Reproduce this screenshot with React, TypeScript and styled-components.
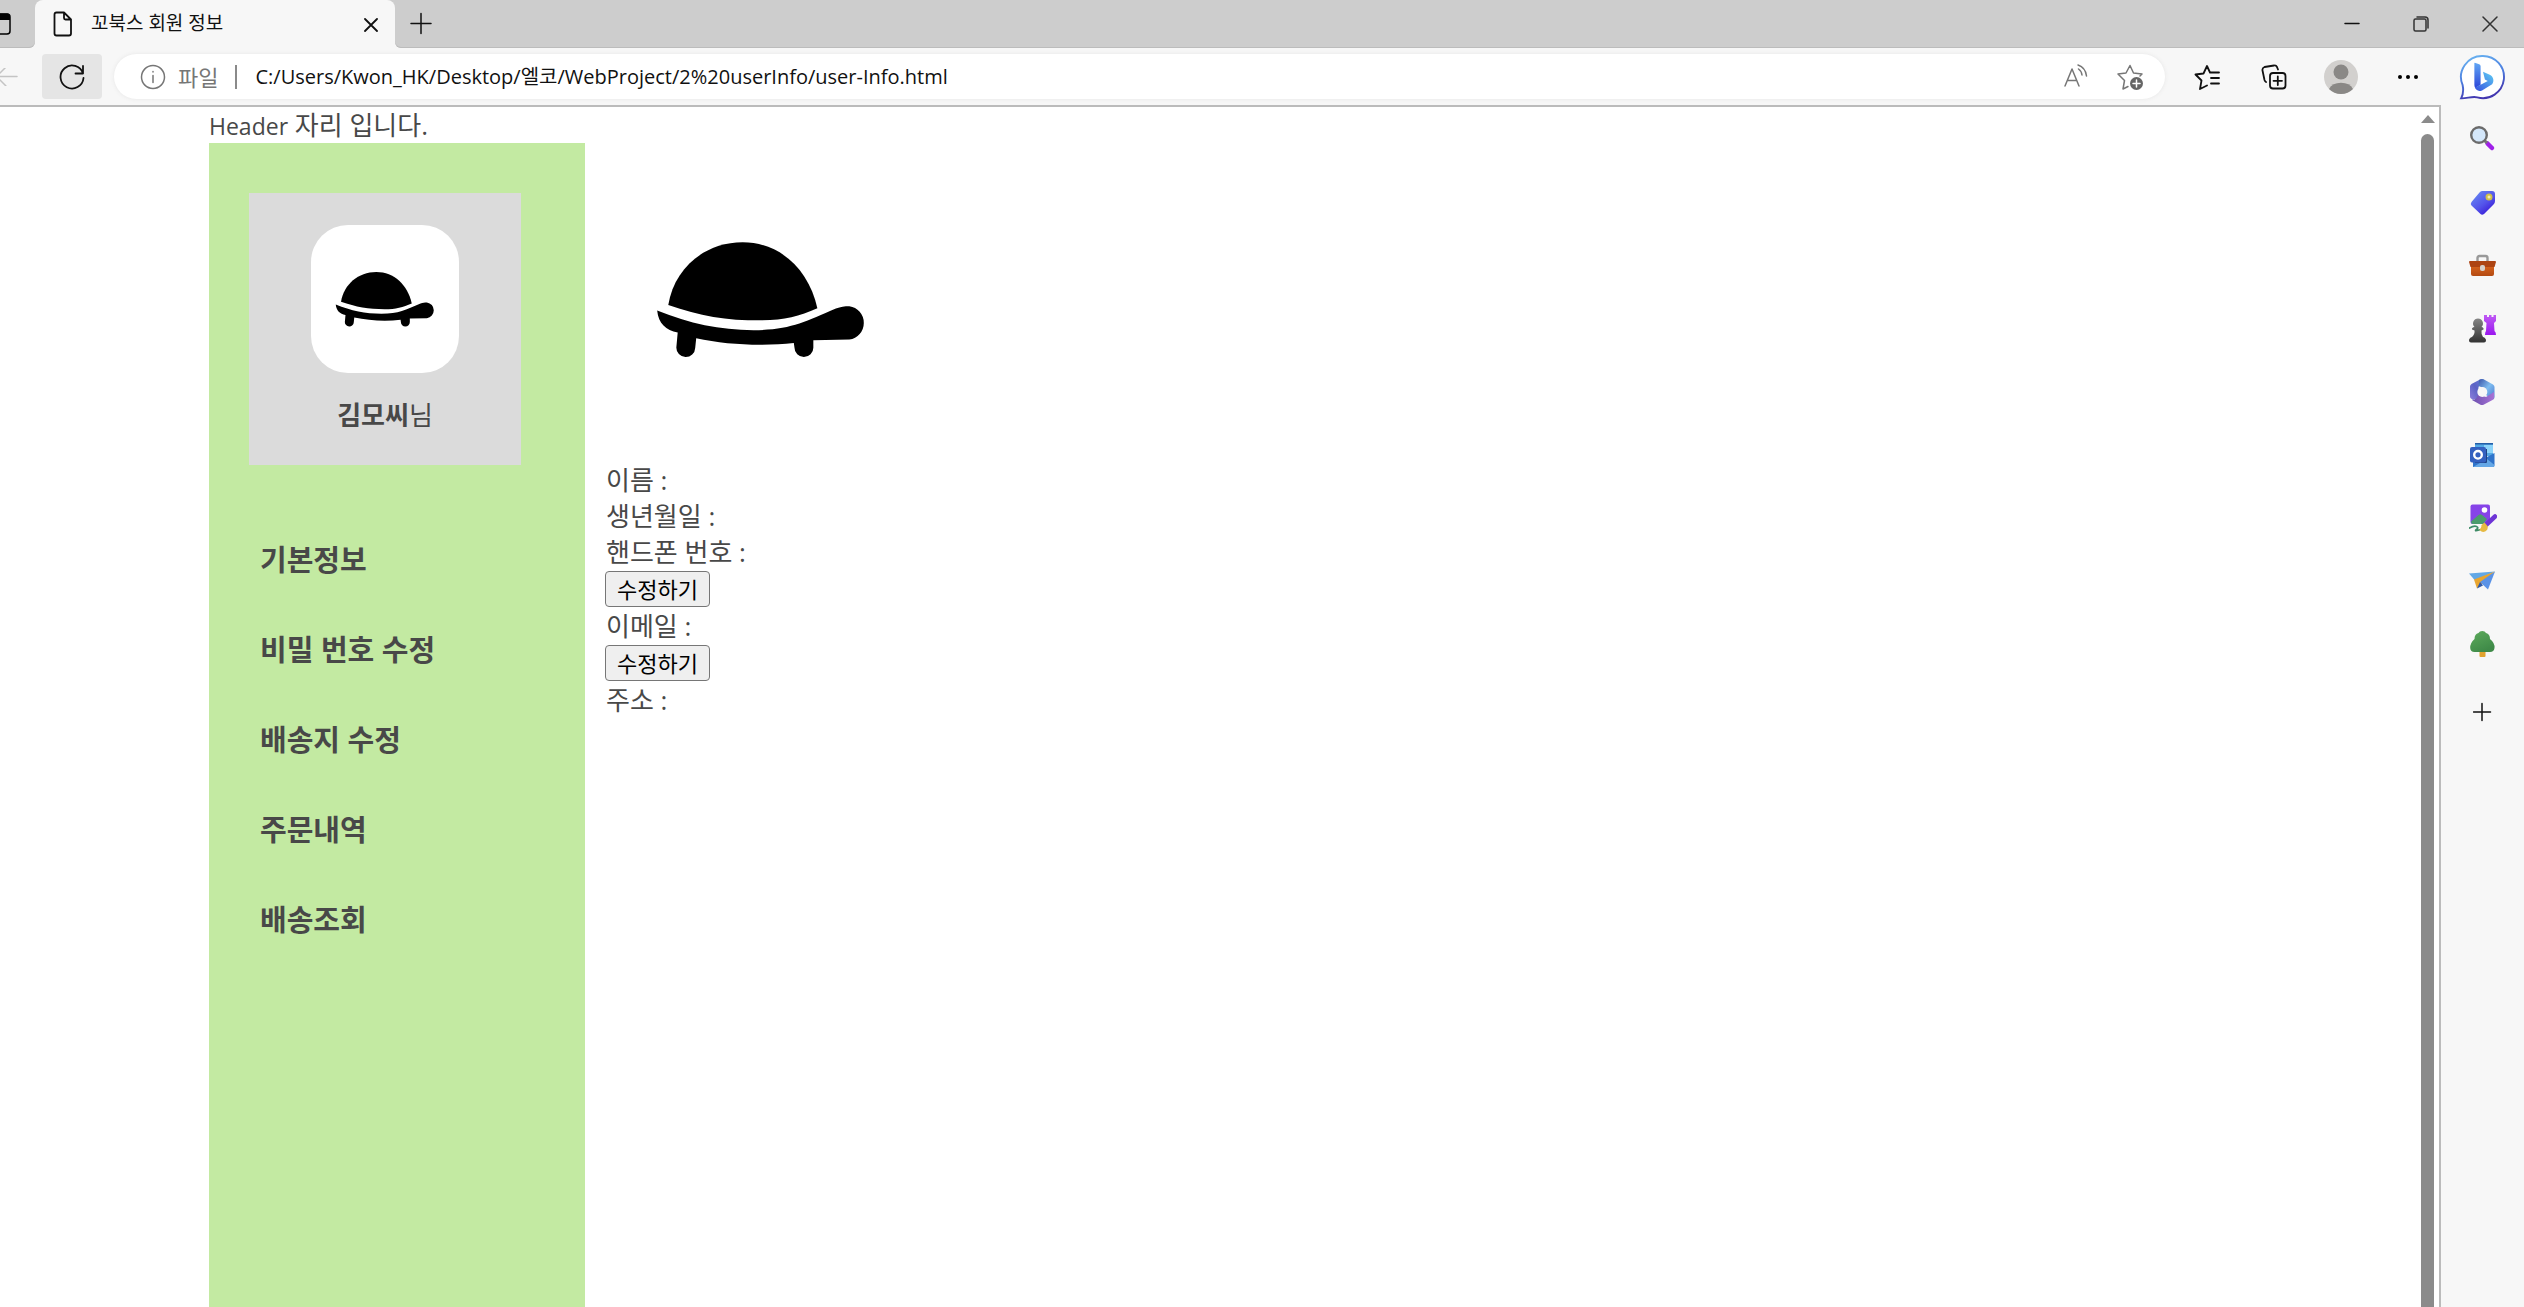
import React from "react";
import styled, { createGlobalStyle, css } from "styled-components";

const GlobalStyle = createGlobalStyle`
  *, *::before, *::after { box-sizing: border-box; }
  body {
    margin: 0;
    overflow: hidden;
    background: #fff;
    font-family: "Open Sans", "Noto Sans CJK KR", sans-serif;
  }
  svg { display: block; flex: none; }
  button { font: inherit; color: inherit; }
`;

const Browser = styled.div`
  display: flex;
  flex-direction: column;
  height: 100vh;
`;

const TitleBar = styled.header`
  display: flex;
  flex: none;
  height: 48px;
  background: #f7f7f7;
`;

const strip = css`
  display: flex;
  align-items: center;
  background: #cdcdcd;
  box-shadow: inset 0 -1px #bcbcbc;
`;

const StripStart = styled.div`
  ${strip}
  width: 35px;
  border-bottom-right-radius: 6px;
  overflow: hidden;
`;

const StripEnd = styled.div`
  ${strip}
  flex: 1;
  border-bottom-left-radius: 6px;
`;

const TabSlot = styled.div`
  width: 360px;
  background: #cdcdcd;
`;

const Tab = styled.div`
  display: flex;
  align-items: center;
  height: 48px;
  padding: 0 10px 0 18px;
  border-radius: 8px 8px 0 0;
  background: #f7f7f7;
  color: #111;
  font-size: 19px;
  line-height: 28px;
`;

const TabTitle = styled.span`
  flex: 1;
  margin-left: 18px;
  padding-bottom: 2px;
`;

const IconButton = styled.button<{ $width: number; $height?: number; $filled?: boolean }>`
  display: flex;
  align-items: center;
  justify-content: center;
  flex: none;
  width: ${(p) => p.$width}px;
  height: ${(p) => p.$height ?? 48}px;
  padding: 0;
  border: 0;
  border-radius: 4px;
  background: ${(p) => (p.$filled ? "#e5e5e5" : "transparent")};
`;

const WindowControls = styled.div`
  display: flex;
  margin-left: auto;
`;

const Body = styled.div`
  display: flex;
  flex: 1;
  min-height: 0;
`;

const Main = styled.div`
  display: flex;
  flex: 1;
  flex-direction: column;
  min-width: 0;
`;

const Toolbar = styled.div`
  display: flex;
  align-items: center;
  flex: none;
  height: 57px;
  background: #f7f7f7;
`;

const BackSlot = styled.div`
  display: flex;
  width: 42px;
  overflow: hidden;
`;

const AddressBar = styled.form`
  display: flex;
  align-items: center;
  flex: 1;
  height: 45px;
  margin: 0 8px 0 12px;
  padding: 0 8px 0 26px;
  border-radius: 23px;
  background: #fff;
  box-shadow: 0 0 4px #e6e6e6;
`;

const Scheme = styled.label`
  margin-left: 12px;
  padding-right: 17px;
  border-right: 2px solid #8a8a8a;
  color: #767676;
  font-size: 22px;
  line-height: 24px;
`;

const AddressInput = styled.input`
  flex: 1;
  min-width: 0;
  margin-left: 18px;
  padding: 0;
  border: 0;
  outline: 0;
  background: transparent;
  color: #111;
  font-family: inherit;
  font-size: 20px;
  line-height: 28px;
`;

const Viewport = styled.div`
  display: flex;
  flex: 1;
  min-height: 0;
  border-top: 2px solid #bbb;
  border-right: 2px solid #bbb;
  background: #fff;
`;

const Page = styled.div`
  display: flex;
  flex: 1;
  flex-direction: column;
  padding-left: 209px;
  color: #484848;
  font-size: 26px;
  line-height: 36px;
`;

const PageHeader = styled.header`
  height: 36px;
`;

const Latin = styled.span`
  font-size: 23px;
`;

const Columns = styled.div`
  display: flex;
  flex: 1;
`;

const Aside = styled.aside`
  width: 376px;
  padding: 50px 40px;
  background: #c3eaa2;
`;

const Profile = styled.section`
  display: flex;
  flex-direction: column;
  align-items: center;
  width: 272px;
  height: 272px;
  padding-top: 32px;
  background: #dbdbdb;
`;

const Portrait = styled.div`
  margin-bottom: 24px;
  border-radius: 37px;
  background: #fff;
`;

const UserName = styled.p`
  margin: 0;
`;

const Menu = styled.nav`
  display: flex;
  flex-direction: column;
  margin-top: 50px;
  padding-left: 11px;
`;

const MenuLink = styled.a`
  color: #484848;
  font-size: 29px;
  font-weight: 700;
  line-height: 90px;
  text-decoration: none;
`;

const Details = styled.main`
  flex: 1;
  padding-left: 20px;
`;

const Picture = styled.div`
  margin-bottom: 7px;
`;

const Field = styled.p`
  margin: 0;
  padding-left: 1px;
`;

const EditButton = styled.button`
  display: block;
  height: 36px;
  margin: 1px 0;
  padding: 0 11px;
  border: 1px solid #767676;
  border-radius: 4px;
  background: #efefef;
  color: #000;
  font-size: 22px;
  line-height: 32px;
`;

const ScrollTrack = styled.div`
  display: flex;
  flex-direction: column;
  align-items: center;
  width: 23px;
  padding-top: 8px;
`;

const ScrollThumb = styled.div`
  flex: 1;
  width: 13px;
  margin-top: 11px;
  border-radius: 7px 7px 0 0;
  background: #8b8b8b;
`;

const SideBar = styled.nav`
  display: flex;
  flex-direction: column;
  width: 83px;
  background: #f7f7f7;
`;

type LineIconProps = { size: number; color?: string; weight?: number; children: React.ReactNode };

const LineIcon = ({ size, color = "#111", weight = 1.5, children }: LineIconProps) => (
  <svg
    width={size}
    height={size}
    viewBox={`0 0 ${size} ${size}`}
    fill="none"
    stroke={color}
    strokeWidth={weight}
    strokeLinecap="round"
    strokeLinejoin="round"
    aria-hidden="true"
  >
    {children}
  </svg>
);

const Turtle = ({ size }: { size: number }) => (
  <svg width={size} height={size} viewBox="49 -172 927 927" role="img" aria-label="turtle">
    <path d="M237 309C255 200 345 123 458 123C570 123 655 205 680 319C625 343 580 355 510 355C410 355 330 342 237 309Z" />
    <path d="M204 326C300 365 390 384 490 384C600 384 640 360 735 320C750 314 760 313 775 313A50 50 0 0 1 775 412L668 414V436A28 28 0 0 1 612 436L610 422C520 432 410 428 320 408L317 437A28 28 0 0 1 261 435L265 391C230 385 208 365 204 326Z" />
  </svg>
);

const BingIcon = () => (
  <svg width="48" height="48" viewBox="0 0 50 50" aria-hidden="true">
    <defs>
      <linearGradient id="bingRing" x1="0" y1="0" x2="0.3" y2="1">
        <stop offset="0" stopColor="#6cb8f2" />
        <stop offset="0.55" stopColor="#4c7fe0" />
        <stop offset="1" stopColor="#4338b0" />
      </linearGradient>
      <linearGradient id="bingStem" x1="0" y1="0" x2="0" y2="1">
        <stop offset="0" stopColor="#62a8f5" />
        <stop offset="1" stopColor="#2b45d8" />
      </linearGradient>
      <linearGradient id="bingBowl" x1="1" y1="0" x2="0.2" y2="1">
        <stop offset="0" stopColor="#5fd0f5" />
        <stop offset="1" stopColor="#3a5be0" />
      </linearGradient>
    </defs>
    <path
      d="M24.500 2A22 22 0 1 1 19 45.200C14 43.700 8 46.500 2.200 46.200C4.500 42 4.700 37 3.800 32.500A22 22 0 0 1 24.500 2Z"
      fill="#fff"
      stroke="url(#bingRing)"
      strokeWidth="2"
    />
    <path d="M16.500 9L21 10.800Q22.500 11.500 22.500 13V32L17 35.500Q16 34 16 32V9.500Z" fill="url(#bingStem)" />
    <path d="M25 18.500L32 21.500C36 23.500 37 28 34.500 31.500L24 38C20 39.500 17.500 37.500 16.500 35L22.500 32L30 28L27 26.500Z" fill="url(#bingBowl)" />
  </svg>
);

const SearchIcon = () => (
  <svg width="28" height="28" viewBox="0 0 28 28" aria-hidden="true">
    <path d="M18.500 17.500L23 22" stroke="#a020e8" strokeWidth="4.500" strokeLinecap="round" />
    <path d="M15 14L18 17" stroke="#777" strokeWidth="3" />
    <circle cx="10" cy="9" r="7.800" fill="#d4e7fa" stroke="#6b6b6b" strokeWidth="2.400" />
  </svg>
);

const TagIcon = () => (
  <svg width="28" height="28" viewBox="0 0 28 28" aria-hidden="true">
    <defs>
      <linearGradient id="tagFill" x1="0" y1="0" x2="0.8" y2="1">
        <stop offset="0" stopColor="#6a92f4" />
        <stop offset="0.6" stopColor="#5352ea" />
        <stop offset="1" stopColor="#3412d4" />
      </linearGradient>
    </defs>
    <path d="M13 2H23Q26 2 26 5V12Q26 14 24.500 15.500L15 25Q13 26.500 11.500 25L2.500 16.500Q1 15 2.500 13L10.500 3.500Q11.500 2 13 2Z" fill="url(#tagFill)" />
    <circle cx="20" cy="8" r="2.500" fill="#f3ecb0" stroke="#cfc04a" strokeWidth="2" />
  </svg>
);

const ToolsIcon = () => (
  <svg width="28" height="28" viewBox="0 0 28 28" aria-hidden="true">
    <defs>
      <linearGradient id="caseFill" x1="0" y1="0" x2="0" y2="1">
        <stop offset="0" stopColor="#d9661f" />
        <stop offset="1" stopColor="#b34a12" />
      </linearGradient>
    </defs>
    <path d="M8.500 9V6Q8.500 4 10.500 4H16.500Q18.500 4 18.500 6V9" fill="none" stroke="#999" strokeWidth="2.400" />
    <path d="M2 13H25V22Q25 24 23 24H4Q2 24 2 22Z" fill="url(#caseFill)" />
    <path d="M0 10Q0 9 1 9H26Q27 9 27 10L25.500 15H1.500Z" fill="#ad4413" />
    <rect x="11" y="13" width="5" height="6" rx="2" fill="#d6d0cb" />
  </svg>
);

const GamesIcon = () => (
  <svg width="28" height="28" viewBox="0 0 28 28" aria-hidden="true">
    <defs>
      <linearGradient id="rookFill" x1="0" y1="0" x2="0" y2="1">
        <stop offset="0" stopColor="#c05af4" />
        <stop offset="1" stopColor="#9a17ef" />
      </linearGradient>
      <linearGradient id="pawnFill" x1="0" y1="0" x2="0" y2="1">
        <stop offset="0" stopColor="#858585" />
        <stop offset="1" stopColor="#333" />
      </linearGradient>
    </defs>
    <path d="M15 0H18V2H20V0H22.500V2H24.500V0H27V6L25 8L25.500 16Q27 17 27 20H16Q16 17 17 16L17.500 8L15 6Z" fill="url(#rookFill)" />
    <path d="M9 3.500A5 5 0 0 1 12.500 12Q15 12.500 14.500 14.500L12.500 15.500Q12 19 14 22Q17 23 17 25.500Q17 27.500 15 27.500H2Q0 27.500 0 25.500Q0 23 3 22Q6 19 5.500 15.500L3 14.500Q2.500 12.500 5.500 12A5 5 0 0 1 9 3.500Z" fill="url(#pawnFill)" />
  </svg>
);

const OfficeIcon = () => (
  <svg width="28" height="28" viewBox="0 0 28 28" aria-hidden="true">
    <defs>
      <linearGradient id="officeLeft" x1="1" y1="0" x2="0" y2="1">
        <stop offset="0" stopColor="#6a7fdc" />
        <stop offset="0.5" stopColor="#5b62c4" />
        <stop offset="1" stopColor="#8d7fdc" />
      </linearGradient>
      <linearGradient id="officeRight" x1="0" y1="0" x2="1" y2="1">
        <stop offset="0" stopColor="#3b55a8" />
        <stop offset="0.5" stopColor="#7fbdf0" />
        <stop offset="1" stopColor="#4773cf" />
      </linearGradient>
      <linearGradient id="officeBase" x1="0" y1="0" x2="1" y2="0">
        <stop offset="0" stopColor="#6b4fae" />
        <stop offset="1" stopColor="#a873d6" />
      </linearGradient>
    </defs>
    <path d="M11 1.500Q13 0.500 15 1.500L9.500 9V20L4 22L2 20.500Q1 20 1 18.500V8.500Q1 7 2.500 6Z" fill="url(#officeLeft)" />
    <path d="M10 2Q13 0.500 15 1.500L24 6.500Q25.500 7.500 25.500 9V19Q25.500 20.500 24 21.500L17 17V11L9.500 8Z" fill="url(#officeRight)" />
    <path d="M9 16L17 19L25 14V19.500Q25 21 23.500 22L15 26.500Q13 27.500 11 26.500L3 22Q8 22 9 16Z" fill="url(#officeBase)" />
    <circle cx="13.300" cy="14" r="5" fill="#f7f7f7" />
  </svg>
);

const OutlookIcon = () => (
  <svg width="28" height="28" viewBox="0 0 28 28" aria-hidden="true">
    <path d="M6 2H24V15H6Z" fill="#54a9e6" />
    <path d="M15 4H24V12H15Z" fill="#8cd3fa" />
    <path d="M6 2H24V3.500H6Z" fill="#245fa8" />
    <path d="M4 16H18L25.500 12V24Q25.500 26 24 26H4Z" fill="#2f73ca" />
    <path d="M4 26L18 18L25.500 24Q25.500 26 24 26Z" fill="#64a7e6" />
    <path d="M17 8H18V21Q18 22 17 22H6V20H17Z" fill="#1f4383" />
    <rect x="1" y="6" width="16" height="15.500" rx="2" fill="#3461c0" />
    <circle cx="9" cy="13.800" r="3.800" fill="none" stroke="#fff" strokeWidth="2.400" />
  </svg>
);

const ImageIcon = () => (
  <svg width="28" height="28" viewBox="0 0 28 28" aria-hidden="true">
    <rect x="1.500" y="0.500" width="19.500" height="19.500" rx="2" fill="#8643e8" />
    <path d="M2 17.500L9.500 11Q11 9.500 13 11L18 15L14 20H4Q2 20 2 17.500Z" fill="#4b9b6d" />
    <circle cx="15.500" cy="6" r="2.800" fill="#fff" />
    <path d="M26 12.500L17.500 20.500" stroke="#6e35d6" strokeWidth="4.500" strokeLinecap="round" />
    <path d="M18.500 22A4.500 4.500 0 0 1 11 26.500Q9.500 26.500 10 25.500Q12.500 24.500 12.500 21L15.500 18.500Z" fill="#e6ba43" />
    <path d="M0.500 24Q5 21.500 7.500 22.500T7.500 25.500T10 26" fill="none" stroke="#3e8b67" strokeWidth="1.800" strokeLinecap="round" />
  </svg>
);

const SendIcon = () => (
  <svg width="28" height="28" viewBox="0 0 28 28" aria-hidden="true">
    <path d="M0 6.500L26 4.500L6 13.500Z" fill="#62a8e6" />
    <path d="M5 12.500L26 4.500L8 21.500Z" fill="#e9a52e" />
    <path d="M11 15L26 4.500L19 22.500Z" fill="#5a92e6" />
    <path d="M8 21.500L11 15L14 18.500Z" fill="#315aa8" />
  </svg>
);

const TreeIcon = () => (
  <svg width="28" height="28" viewBox="0 0 28 28" aria-hidden="true">
    <defs>
      <linearGradient id="treeFill" x1="0" y1="0" x2="0.5" y2="1">
        <stop offset="0" stopColor="#5dab5c" />
        <stop offset="1" stopColor="#3f8a48" />
      </linearGradient>
    </defs>
    <rect x="10.500" y="19" width="6" height="8" rx="1" fill="#e2a32f" />
    <path d="M9.500 3Q10.500 1 13.300 1Q16 1 17 3Q21 4 21 9Q26 13 25.500 18Q25 22 21 22H5.500Q1.500 22 1.200 18Q1 13 5.500 9Q5.500 4 9.500 3Z" fill="url(#treeFill)" />
  </svg>
);

const sideApps = [
  { name: "Search", Icon: SearchIcon },
  { name: "Shopping", Icon: TagIcon },
  { name: "Tools", Icon: ToolsIcon },
  { name: "Games", Icon: GamesIcon },
  { name: "Microsoft 365", Icon: OfficeIcon },
  { name: "Outlook", Icon: OutlookIcon },
  { name: "Image Creator", Icon: ImageIcon },
  { name: "Drop", Icon: SendIcon },
  { name: "Tree", Icon: TreeIcon },
];

const menuItems = ["기본정보", "비밀 번호 수정", "배송지 수정", "주문내역", "배송조회"];

export default function App() {
  return (
    <Browser>
      <GlobalStyle />
      <TitleBar>
        <StripStart>
          <svg width="12" height="24" viewBox="0 0 12 24" aria-hidden="true">
            <rect x="-12" y="2" width="22" height="20" rx="3" fill="none" stroke="#000" strokeWidth="1.500" />
            <path d="M0 1.500H8Q10 2 10 4V8H0Z" />
          </svg>
        </StripStart>
        <TabSlot>
          <Tab>
            <svg width="20" height="26" viewBox="0 0 20 26" fill="none" stroke="#111" strokeWidth="1.800" strokeLinejoin="round" aria-hidden="true">
              <path d="M3.500 1.500H11L18 8.500V22.500Q18 24.500 16 24.500H3.500Q1.500 24.500 1.500 22.500V3.500Q1.500 1.500 3.500 1.500ZM11 1.500V7Q11 8.500 12.500 8.500H18" />
            </svg>
            <TabTitle>꼬북스 회원 정보</TabTitle>
            <IconButton $width={28} aria-label="Close tab">
              <LineIcon size={16} weight={1.8}>
                <path d="M2 3L14 15M14 3L2 15" />
              </LineIcon>
            </IconButton>
          </Tab>
        </TabSlot>
        <StripEnd>
          <IconButton $width={52} aria-label="New tab">
            <LineIcon size={24}>
              <path d="M12 1.500V21.500M2 11.500H22" />
            </LineIcon>
          </IconButton>
          <WindowControls>
            <IconButton $width={69} aria-label="Minimize">
              <LineIcon size={16}>
                <path d="M1 7.500H15" />
              </LineIcon>
            </IconButton>
            <IconButton $width={69} aria-label="Restore">
              <LineIcon size={16} color="#333">
                <rect x="1" y="3" width="12" height="12" rx="1.500" />
                <path d="M4 1H12Q15 1 15 4V12" />
              </LineIcon>
            </IconButton>
            <IconButton $width={69} aria-label="Close">
              <LineIcon size={16} color="#333">
                <path d="M1 1L15 15M15 1L1 15" />
              </LineIcon>
            </IconButton>
          </WindowControls>
        </StripEnd>
      </TitleBar>

      <Body>
        <Main>
          <Toolbar>
            <BackSlot>
              <IconButton $width={18} $height={45} aria-label="Back">
                <LineIcon size={18} color="#c4c4c4">
                  <path d="M-3 8.500H17M6 -1L-3.500 8.500L6 18" />
                </LineIcon>
              </IconButton>
            </BackSlot>
            <IconButton $width={60} $height={45} $filled aria-label="Refresh">
              <LineIcon size={26} weight={1.8}>
                <path d="M24 9.500A11.500 11.500 0 1 0 24.500 14M24 2V9.500H16.500" />
              </LineIcon>
            </IconButton>
            <AddressBar onSubmit={(e) => e.preventDefault()}>
              <LineIcon size={26} color="#767676">
                <circle cx="13" cy="13" r="11.500" />
                <path d="M13 11.500V18.500M13 7.500V8" />
              </LineIcon>
              <Scheme htmlFor="address">파일</Scheme>
              <AddressInput
                id="address"
                type="text"
                spellCheck={false}
                defaultValue="C:/Users/Kwon_HK/Desktop/엘코/WebProject/2%20userInfo/user-Info.html"
              />
              <IconButton type="button" $width={54} $height={45} aria-label="Read aloud">
                <LineIcon size={26} color="#767676">
                  <path d="M2 22L9 5L16 22M4.500 16.500H13.500M15.500 5Q18.500 7 19 11M15 1Q22.500 3.500 23.500 12" />
                </LineIcon>
              </IconButton>
              <IconButton type="button" $width={54} $height={45} aria-label="Add to favorites">
                <LineIcon size={26} color="#767676">
                  <path d="M11 22.500L6 25L7.500 16.500L1 10L9 9L13 1.500L16.500 9L25 10L23 12" />
                  <circle cx="19.500" cy="19.500" r="6.500" fill="#666" stroke="none" />
                  <path d="M19.500 16V23M16 19.500H23" stroke="#fff" />
                </LineIcon>
              </IconButton>
            </AddressBar>
            <IconButton $width={67} $height={45} aria-label="Favorites">
              <LineIcon size={26} weight={1.8}>
                <path d="M13 21.500L6 25L7.500 16.500L1.500 10.500L9.500 9.500L13 2L16 8.500H25M17 14H25M17 19.500H25" />
              </LineIcon>
            </IconButton>
            <IconButton $width={67} $height={45} aria-label="Collections">
              <LineIcon size={26} weight={1.8}>
                <rect x="9" y="9" width="15.500" height="15.500" rx="3" />
                <path d="M16.800 12.500V21M12.500 16.800H21M5 18Q4 17.500 3.500 16L1.500 6.500Q1 4 3.500 3L13 1.500Q15 1 16 3L17 5.500" />
              </LineIcon>
            </IconButton>
            <IconButton $width={67} $height={45} aria-label="Profile">
              <svg width="34" height="34" viewBox="0 0 34 34" aria-hidden="true">
                <circle cx="17" cy="17" r="17" fill="#d2d0ce" />
                <circle cx="17" cy="12" r="7.500" fill="#8a8886" />
                <path d="M5 29A13 10 0 0 1 29 29A17 17 0 0 1 5 29Z" fill="#8a8886" />
              </svg>
            </IconButton>
            <IconButton $width={67} $height={45} aria-label="Settings and more">
              <svg width="20" height="4" viewBox="0 0 20 4" aria-hidden="true">
                <circle cx="2" cy="2" r="2" />
                <circle cx="10" cy="2" r="2" />
                <circle cx="18" cy="2" r="2" />
              </svg>
            </IconButton>
          </Toolbar>

          <Viewport>
            <Page>
              <PageHeader>
                <Latin>Header</Latin> 자리 입니다.
              </PageHeader>
              <Columns>
                <Aside>
                  <Profile>
                    <Portrait>
                      <Turtle size={148} />
                    </Portrait>
                    <UserName>
                      <b>김모씨</b>님
                    </UserName>
                  </Profile>
                  <Menu>
                    {menuItems.map((item) => (
                      <MenuLink key={item} href="#">
                        {item}
                      </MenuLink>
                    ))}
                  </Menu>
                </Aside>
                <Details>
                  <Picture>
                    <Turtle size={312} />
                  </Picture>
                  <Field>이름 :</Field>
                  <Field>생년월일 :</Field>
                  <Field>핸드폰 번호 :</Field>
                  <EditButton>수정하기</EditButton>
                  <Field>이메일 :</Field>
                  <EditButton>수정하기</EditButton>
                  <Field>주소 :</Field>
                </Details>
              </Columns>
            </Page>
            <ScrollTrack>
              <svg width="14" height="8" viewBox="0 0 14 8" aria-hidden="true">
                <path d="M7 0L14 8H0Z" fill="#8b8b8b" />
              </svg>
              <ScrollThumb />
            </ScrollTrack>
          </Viewport>
        </Main>

        <SideBar>
          <IconButton $width={83} $height={60} aria-label="Bing">
            <BingIcon />
          </IconButton>
          {sideApps.map(({ name, Icon }) => (
            <IconButton key={name} $width={83} $height={63} aria-label={name}>
              <Icon />
            </IconButton>
          ))}
          <IconButton $width={83} $height={74} aria-label="Customize">
            <LineIcon size={20}>
              <path d="M9 1.500V18.500M0.500 10H17.500" />
            </LineIcon>
          </IconButton>
        </SideBar>
      </Body>
    </Browser>
  );
}
